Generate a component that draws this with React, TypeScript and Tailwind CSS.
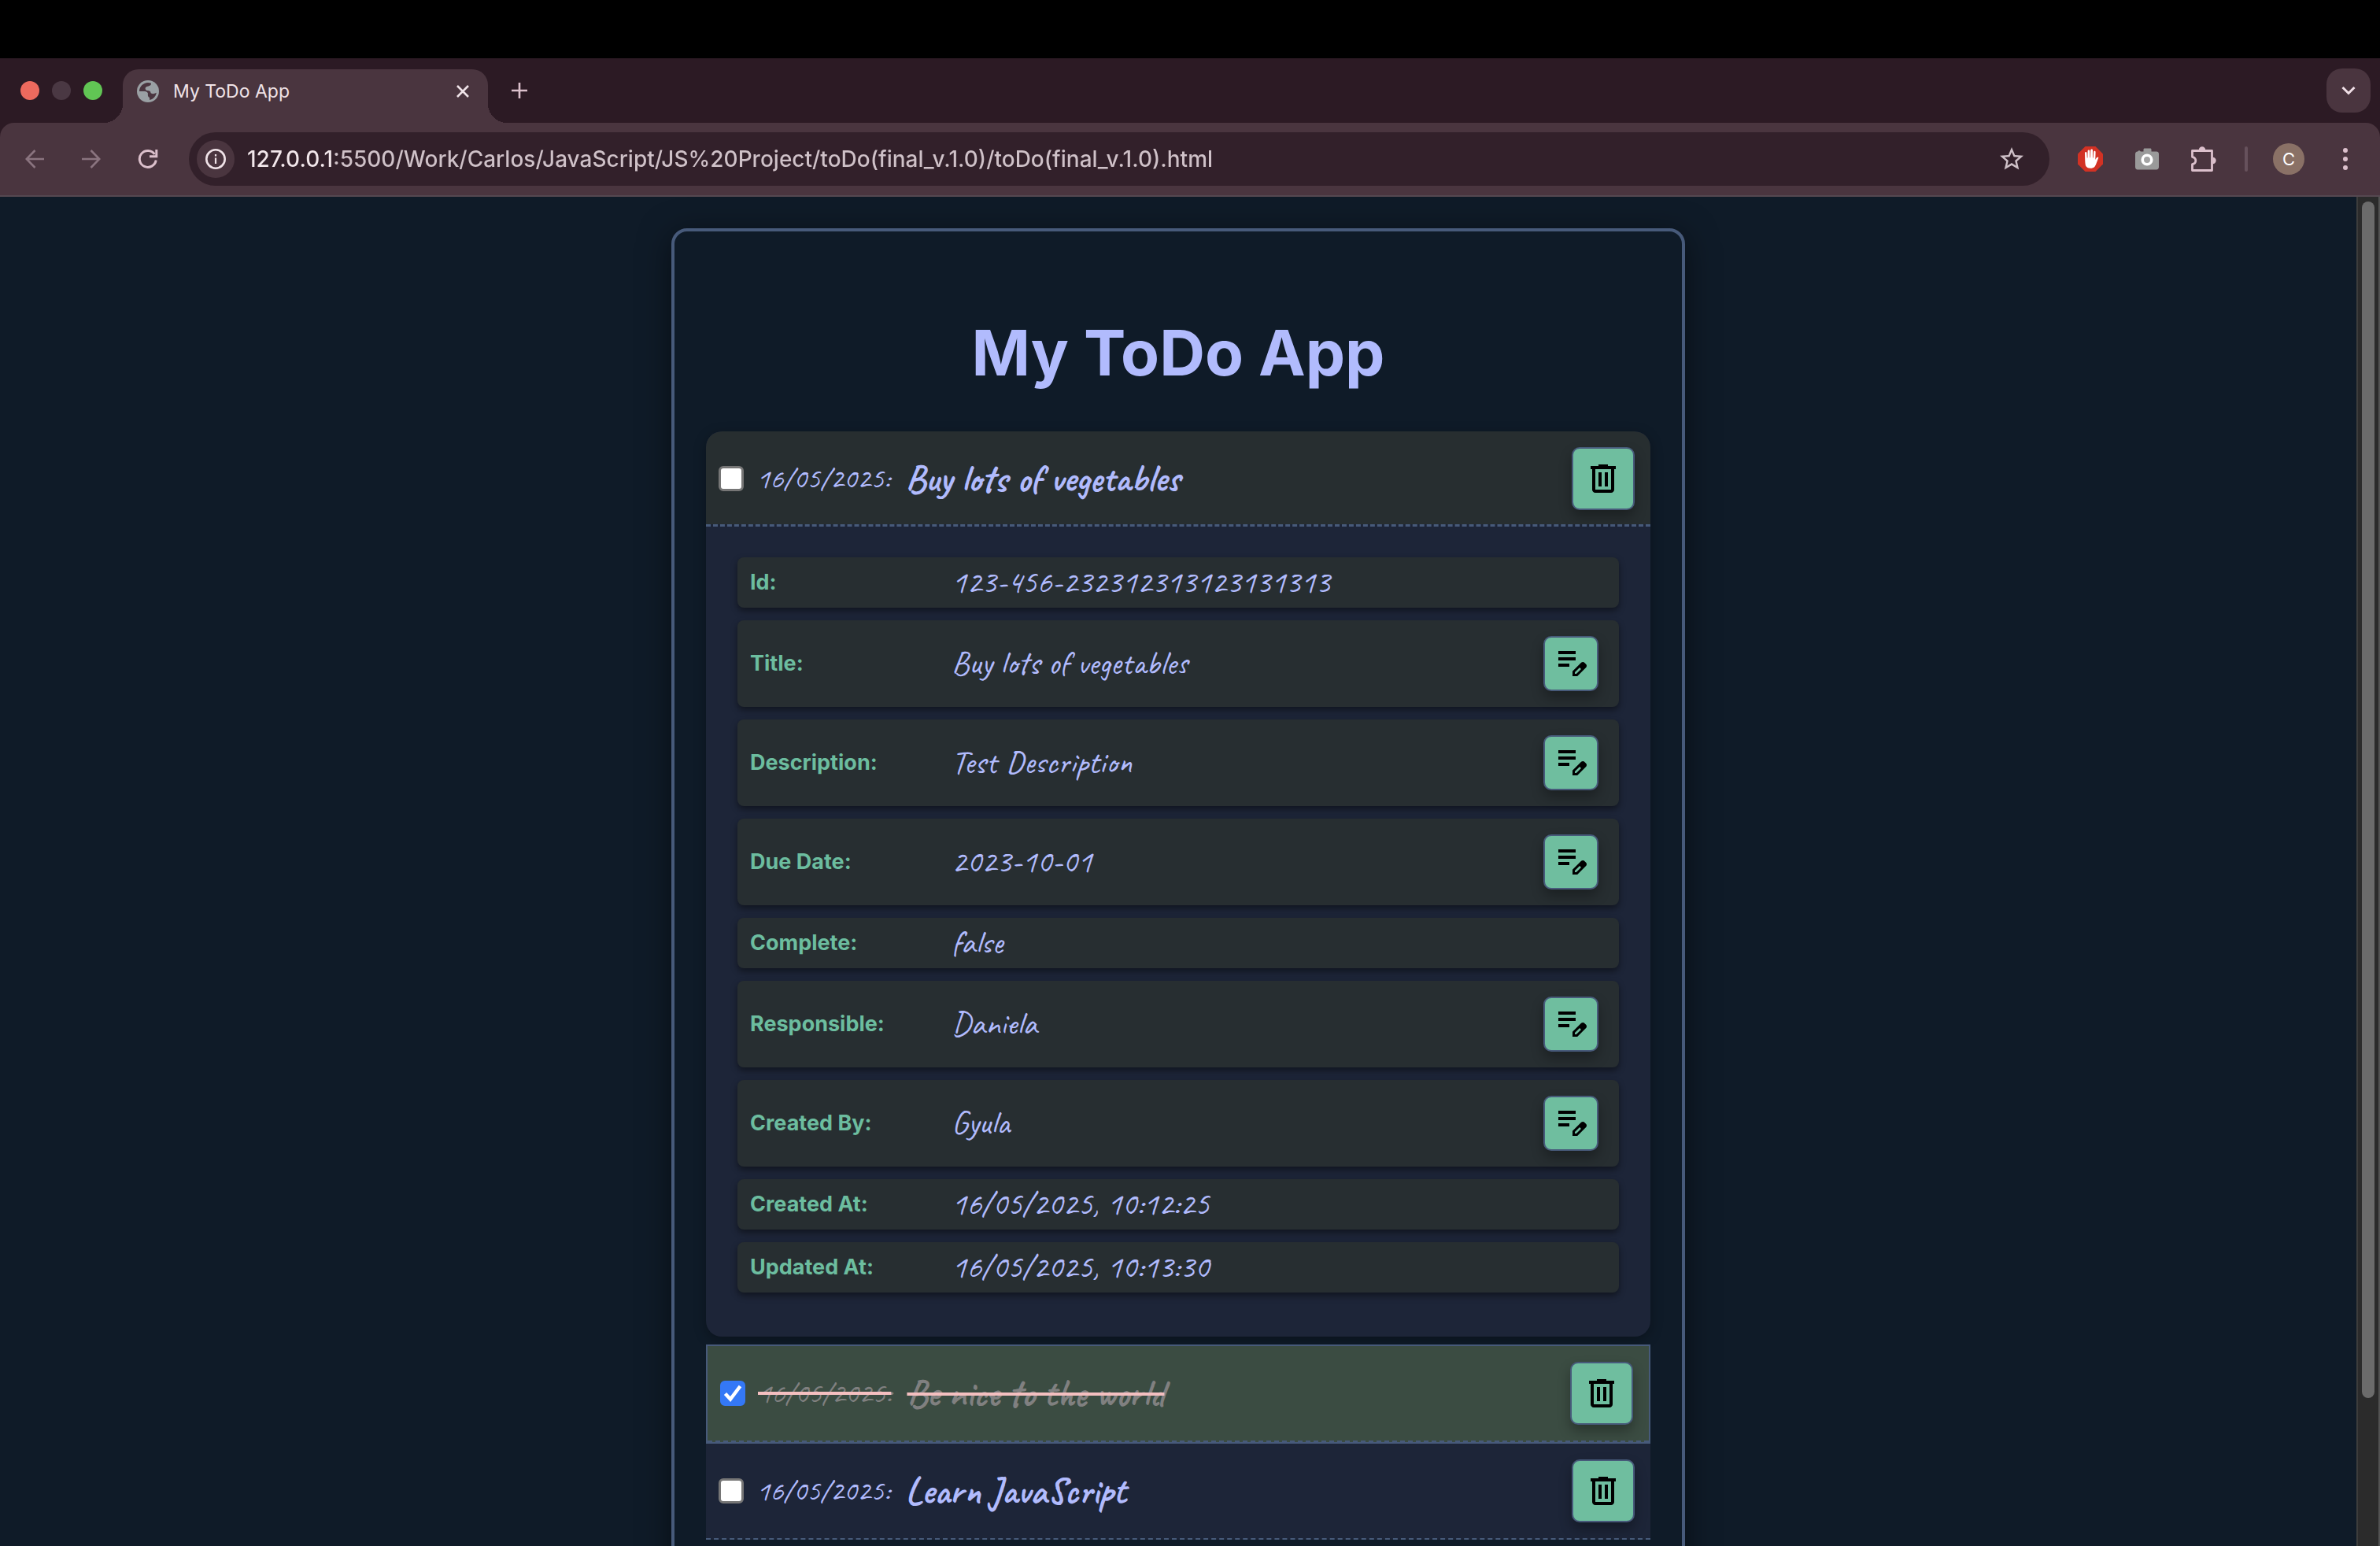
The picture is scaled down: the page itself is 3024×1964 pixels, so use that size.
import { useState, type ReactNode } from "react";
import { MdStarBorder } from "react-icons/md";

type Field = { label: string; value: string; editable?: boolean };

const fields: Field[] = [
  { label: "Id:", value: "123-456-232312313123131313" },
  { label: "Title:", value: "Buy lots of vegetables", editable: true },
  { label: "Description:", value: "Test Description", editable: true },
  { label: "Due Date:", value: "2023-10-01", editable: true },
  { label: "Complete:", value: "false" },
  { label: "Responsible:", value: "Daniela", editable: true },
  { label: "Created By:", value: "Gyula", editable: true },
  { label: "Created At:", value: "16/05/2025, 10:12:25" },
  { label: "Updated At:", value: "16/05/2025, 10:13:30" },
];

const url =
  "127.0.0.1:5500/Work/Carlos/JavaScript/JS%20Project/toDo(final_v.1.0)/toDo(final_v.1.0).html";

function GlobeIcon() {
  return (
    <svg viewBox="0 0 28 28" className="size-7 shrink-0">
      <circle cx="14" cy="14" r="14" fill="#9aa0a4" />
      <path
        d="M3 14C3 8 8 3 14 3c1.400 0 2.800.300 4 .8C18 7 15.500 7.200 12.500 8c-2.500.8-2.500 4.500.5 5 3 0 4.500 1 4.500 3 1.500 1.800 4.500 1.300 7.300-.3C24 20.500 20.500 24.300 16 24.900V22c-2-.8-2.500-2.800-2-5-.3-2.500-3-3-6-3Z"
        fill="#4a353f"
      />
    </svg>
  );
}

function TrashIcon() {
  return (
    <svg viewBox="0 -960 960 960" className="size-12" fill="#000">
      <path d="M280-120q-33 0-56.500-23.500T200-200v-520h-40v-80h200v-40h240v40h200v80h-40v520q0 33-23.500 56.500T680-120H280Zm400-600H280v520h400v-520ZM360-280h80v-360h-80v360Zm160 0h80v-360h-80v360Z" />
    </svg>
  );
}

function EditNoteIcon() {
  return (
    <svg viewBox="0 -960 960 960" className="size-12" fill="#000">
      <path d="M160-400v-80h280v80H160Zm0-160v-80h440v80H160Zm0-160v-80h440v80H160Zm360 560v-123l221-220q9-9 20-13t22-4q12 0 23 4.500t20 13.500l37 37q8 9 12.500 20t4.500 22q0 11-4 22.500T863-380L643-160H520Zm300-263-37-37 37 37ZM580-220h38l121-122-18-19-19-18-122 121v38Zm141-141-19-18 37 37-18-19Z" />
    </svg>
  );
}

function ToolbarButton({ label, children }: { label: string; children: ReactNode }) {
  return (
    <button type="button" aria-label={label} className="flex h-[68px] w-[72px] shrink-0 items-center justify-center">
      {children}
    </button>
  );
}

function TabStrip() {
  return (
    <div className="flex h-[82px] items-center bg-[#2c1a24] pr-3 pl-[26px]">
      <div className="flex gap-4">
        <button type="button" aria-label="Close window" className="size-6 rounded-full bg-[#ed6a5e]" />
        <button type="button" aria-label="Minimise window" className="size-6 rounded-full bg-[#4a3843]" />
        <button type="button" aria-label="Full screen" className="size-6 rounded-full bg-[#61c554]" />
      </div>
      <div className="relative ml-[26px] flex h-[68px] w-[464px] items-center self-end rounded-t-[20px] bg-[#4a353f] pb-3 pl-[18px] pr-5">
        <span className="absolute bottom-0 -left-6 size-6 bg-[radial-gradient(circle_at_0_0,transparent_24px,#4a353f_24px)]" />
        <span className="absolute -right-6 bottom-0 size-6 bg-[radial-gradient(circle_at_100%_0,transparent_24px,#4a353f_24px)]" />
        <GlobeIcon />
        <span className="ml-[18px] flex-1 text-[23px] leading-7 text-[#f0e3e8]">My ToDo App</span>
        <button type="button" aria-label="Close tab" className="flex size-6 items-center justify-center">
          <svg viewBox="0 0 16 16" className="size-4" fill="none" stroke="#f0e3e8" strokeWidth="2.600">
            <path d="M1 1l14 14M15 1L1 15" />
          </svg>
        </button>
      </div>
      <button type="button" aria-label="New tab" className="ml-5 flex size-10 items-center justify-center">
        <svg viewBox="0 0 20 20" className="size-5" fill="none" stroke="#dcc0cc" strokeWidth="2.600">
          <path d="M10 0v20M0 10h20" />
        </svg>
      </button>
      <button
        type="button"
        aria-label="Search tabs"
        className="ml-auto flex size-14 items-center justify-center rounded-[20px] bg-[#4a353f]"
      >
        <svg viewBox="0 0 18 12" className="h-3 w-[18px]" fill="none" stroke="#f0dfe6" strokeWidth="3">
          <path d="M1.500 2 9 9.500 16.500 2" />
        </svg>
      </button>
    </div>
  );
}

function Toolbar() {
  return (
    <div className="bg-[#2c1a24]">
      <div className="flex items-center rounded-t-[18px] border-b-2 border-[#554850] bg-[#4a353f] px-2 py-3">
        <ToolbarButton label="Back">
          <svg viewBox="0 0 24 24" className="size-6" fill="none" stroke="#8a747f" strokeWidth="2.600">
            <path d="M12.500 1 1.800 12l10.700 11M2 12h22" />
          </svg>
        </ToolbarButton>
        <ToolbarButton label="Forward">
          <svg viewBox="0 0 24 24" className="size-6" fill="none" stroke="#8a747f" strokeWidth="2.600">
            <path d="M11.500 1l10.700 11-10.700 11M22 12H0" />
          </svg>
        </ToolbarButton>
        <ToolbarButton label="Reload">
          <svg viewBox="0 0 26 26" className="size-[26px]" fill="none" stroke="#dcc0cc" strokeWidth="3">
            <path d="M23.200 14.500A10.500 10.500 0 1 1 21.500 7" />
            <path d="M23.800 1v8.800H15" />
          </svg>
        </ToolbarButton>
        <div className="ml-4 flex h-[68px] min-w-0 flex-1 items-center rounded-full bg-[#32202a] pl-[10px] pr-[30px]">
          <button
            type="button"
            aria-label="View site information"
            className="flex size-12 shrink-0 items-center justify-center rounded-full bg-[#4a353f]"
          >
            <svg viewBox="0 0 26 26" className="size-[26px]" fill="none" stroke="#f0e3e8">
              <circle cx="13" cy="13" r="11.700" strokeWidth="2.600" />
              <path d="M13 11.500v7.500M13 7v2.600" strokeWidth="2.200" />
            </svg>
          </button>
          <input
            type="text"
            aria-label="Address"
            defaultValue={url}
            spellCheck={false}
            className="ml-4 h-10 min-w-0 flex-1 bg-[linear-gradient(90deg,#f2e7eb_112px,#cfc1c8_112px)] bg-clip-text text-[28px] font-medium text-transparent outline-none"
          />
          <button type="button" aria-label="Bookmark this page" className="shrink-0">
            <MdStarBorder className="size-9 text-[#cfc1c8]" />
          </button>
        </div>
        <div className="ml-4 flex shrink-0 items-center">
          <ToolbarButton label="Ad blocker">
            <svg viewBox="0 0 32 32" className="size-8">
              <path d="M9.500 0h13L32 9.500v13L22.500 32h-13L0 22.500v-13Z" fill="#d23224" />
              <path
                d="M9 8.500c0-2 2.400-2 2.500 0l.3 6h.6L12.600 6c0-2 2.700-2 2.700 0l.2 8.200h.6L16.300 5c.1-1.900 2.700-1.900 2.700 0l.1 9.500h.6l.5-7.500c.2-1.800 2.500-1.700 2.400.2L22.300 17c.9-1.600 1.500-3.200 3.200-3.400.9 0 .9.8.6 1.500-1.700 3.900-2.600 8.200-4.600 10.600-2.800 3-8.900 2.800-11-.4C9 23 9.200 14 9 8.500Z"
                fill="#fff"
              />
            </svg>
          </ToolbarButton>
          <ToolbarButton label="Screenshot">
            <svg viewBox="0 0 30 28" className="h-7 w-[30px]">
              <path
                d="M3 4.500 5 3l2 1.500h3.500V2c0-1 .7-1.500 1.500-1.500h7c1 0 1.500.6 1.500 1.500v2.500H27c1.700 0 3 1.200 3 3V24c0 2-1.200 3.500-3 3.500H3c-1.800 0-3-1.500-3-3.500V8C0 6 1 4.500 3 4.500Z"
                fill="#9a9a9a"
              />
              <circle cx="15" cy="15" r="5.800" fill="#a5a5a5" stroke="#fff" strokeWidth="3.600" />
            </svg>
          </ToolbarButton>
          <ToolbarButton label="Extensions">
            <svg viewBox="0 0 32 32" className="size-8" fill="#dcc0cc">
              <path
                d="M1.500 5.500h25v25h-25v-7.800c3-.7 4.300-2.700 4.300-4.700s-1.300-4-4.300-4.700Z"
                fill="none"
                stroke="#dcc0cc"
                strokeWidth="2.800"
                strokeLinejoin="round"
              />
              <path d="M9.800 4.500a4.200 4.200 0 0 1 8.400 0ZM27.500 13.800a4.200 4.200 0 0 1 0 8.400Z" />
            </svg>
          </ToolbarButton>
          <span className="mx-4 h-8 w-1 rounded-full bg-[#66515c]" />
          <ToolbarButton label="Profile">
            <span className="flex size-10 items-center justify-center rounded-full bg-[#8a7166] text-[22px] text-white">
              C
            </span>
          </ToolbarButton>
          <ToolbarButton label="Menu">
            <svg viewBox="0 0 6 28" className="h-7 w-[6px]" fill="#dcc0cc">
              <circle cx="3" cy="3" r="3" />
              <circle cx="3" cy="14" r="3" />
              <circle cx="3" cy="25" r="3" />
            </svg>
          </ToolbarButton>
        </div>
      </div>
    </div>
  );
}

function ItemLine({ id, title, initial = false }: { id: string; title: string; initial?: boolean }) {
  const [done, setDone] = useState(initial);
  const tone = done
    ? "text-[#808080] line-through decoration-[#f4bfc0] decoration-4"
    : "text-[#b1bbfd]";
  return (
    <>
      <span className="relative size-8 shrink-0">
        <input
          id={id}
          type="checkbox"
          checked={done}
          onChange={(e) => setDone(e.target.checked)}
          className="block size-8 appearance-none rounded-md border-[3px] border-[#767676] bg-white checked:border-[#3478f6] checked:bg-[#3478f6]"
        />
        {done && (
          <svg viewBox="0 0 32 32" className="pointer-events-none absolute inset-0 size-8" fill="none" stroke="#fff" strokeWidth="4.500">
            <path d="M6.500 16.500l6.500 7L25.500 7" />
          </svg>
        )}
      </span>
      <label htmlFor={id} className="ml-4 flex flex-1 items-center gap-5 font-['Caveat',cursive]">
        <span className={`text-[38px] leading-[48px] font-medium ${tone}`}>16/05/2025:</span>
        <span className={`text-[48px] leading-[60px] font-bold ${tone}`}>{title}</span>
      </label>
      <button
        type="button"
        aria-label={`Delete ${title}`}
        className="flex size-20 shrink-0 items-center justify-center rounded-[10px] border-2 border-[#475a7a] bg-[#6fbe9f] shadow-[0_8px_16px_rgba(0,0,0,0.3)]"
      >
        <TrashIcon />
      </button>
    </>
  );
}

function FieldRow({ label, value, editable }: Field) {
  return (
    <li className="flex min-h-16 items-center rounded-lg bg-[#272e31] pr-[26px] pl-4 shadow-[0_4px_8px_rgba(0,0,0,0.45)]">
      <span className="w-64 shrink-0 text-[27px] leading-8 font-bold text-[#6cbd9f]">{label}</span>
      <span className="flex-1 font-['Caveat',cursive] text-[42px] leading-[52px] font-medium text-[#b1bbfd]">{value}</span>
      {editable && (
        <button
          type="button"
          aria-label={`Edit ${label.replace(":", "")}`}
          className="my-5 flex size-[70px] shrink-0 items-center justify-center rounded-[10px] border-2 border-[#475a7a] bg-[#6fbe9f] shadow-[0_8px_16px_rgba(0,0,0,0.3)]"
        >
          <EditNoteIcon />
        </button>
      )}
    </li>
  );
}

export default function App() {
  return (
    <div className="flex h-screen flex-col overflow-hidden bg-black pt-[74px] font-['Inter',sans-serif]">
      <TabStrip />
      <Toolbar />
      <div className="flex min-h-0 flex-1 bg-[#0f1b28]">
        <main className="min-w-0 flex-1 overflow-hidden pt-10">
          <div className="mx-auto w-full max-w-[1288px] rounded-[20px] border-4 border-[#475a7a] bg-[#0f1b28] px-10 pt-[106px] pb-10 shadow-[0_8px_40px_rgba(0,0,0,0.5)]">
            <h1 className="mb-[52px] text-center text-[80px] leading-[96px] font-bold text-[#b1bbfd]">My ToDo App</h1>

            <article className="mb-[10px] rounded-[20px] bg-[#1d2538] shadow-[0_4px_16px_rgba(0,0,0,0.3)]">
              <header className="flex items-center rounded-t-[20px] border-b-[3px] border-dashed border-[#475a7a] bg-[#272e30] bg-clip-padding pt-5 pr-5 pb-[18px] pl-4">
                <ItemLine id="todo-1" title="Buy lots of vegetables" />
              </header>
              <ul className="flex flex-col gap-4 px-10 pt-[39px] pb-14">
                {fields.map((field) => (
                  <FieldRow key={field.label} {...field} />
                ))}
              </ul>
            </article>

            <article className="border-2 border-[#475a7a] bg-[#3b4c42]">
              <header className="flex items-center border-b-2 border-dashed border-[#475a7a] py-5 pr-5 pl-4">
                <ItemLine id="todo-2" title="Be nice to the world" initial />
              </header>
            </article>

            <article className="bg-[#1d2538]">
              <header className="flex items-center border-b-2 border-dashed border-[#475a7a] py-5 pr-5 pl-4">
                <ItemLine id="todo-3" title="Learn JavaScript" />
              </header>
            </article>
          </div>
        </main>
        <div className="flex w-[30px] shrink-0 justify-center border-x-2 border-l-[#3d3d3d] border-r-[#525252] bg-[#2b2b2b] pt-[6px]">
          <div className="h-[89%] w-4 rounded-full bg-[#6b6b6b]" />
        </div>
      </div>
    </div>
  );
}
